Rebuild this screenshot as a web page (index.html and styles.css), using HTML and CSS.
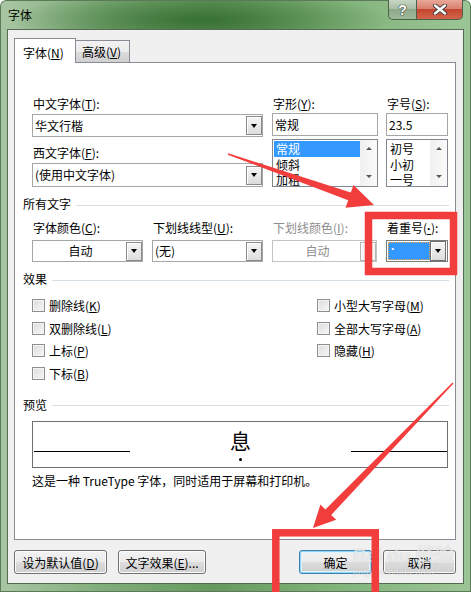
FILE: index.html
```html
<!DOCTYPE html>
<html>
<head>
    <meta charset="utf-8" />
    <title>字体</title>
    <link rel="stylesheet" href="styles.css">
</head>
<body>
<div class="window">
    <div class="titlebar">
        <span class="title">字体</span>
        <div class="caption">
            <span class="cap-help">?</span>
            <span class="cap-close">
                <svg width="14" height="11" viewBox="0 0 14 11">
                    <path d="M2 1.5 L12 9.5 M12 1.5 L2 9.5" stroke="#3b3b3b" stroke-width="4.2" stroke-linecap="round"/>
                    <path d="M2 1.5 L12 9.5 M12 1.5 L2 9.5" stroke="#fff" stroke-width="2.4" stroke-linecap="round"/>
                </svg>
            </span>
        </div>
    </div>
    <div class="client">
        <div class="tabs">
            <div class="tab active">字体(<u>N</u>)</div>
            <div class="tab">高级(<u>V</u>)</div>
        </div>
        <div class="panel">
            <div class="font-row">
                <div class="col col-cn">
                    <span class="lbl">中文字体(<u>T</u>):</span>
                    <div class="combo"><span>华文行楷</span><i class="drop"></i></div>
                    <span class="lbl second">西文字体(<u>F</u>):</span>
                    <div class="combo tall"><span>(使用中文字体)</span><i class="drop"></i></div>
                </div>
                <div class="col col-style">
                    <span class="lbl">字形(<u>Y</u>):</span>
                    <div class="tbox">常规</div>
                    <div class="listbox">
                        <ul>
                            <li class="sel">常规</li>
                            <li>倾斜</li>
                            <li>加粗</li>
                        </ul>
                        <div class="vscroll"><i class="up"></i><i class="down"></i></div>
                    </div>
                </div>
                <div class="col col-size">
                    <span class="lbl">字号(<u>S</u>):</span>
                    <div class="tbox">23.5</div>
                    <div class="listbox">
                        <ul>
                            <li>初号</li>
                            <li>小初</li>
                            <li>一号</li>
                        </ul>
                        <div class="vscroll"><i class="up"></i><i class="down"></i></div>
                    </div>
                </div>
            </div>

            <div class="ghead">所有文字</div>
            <div class="color-row">
                <div class="field f-color">
                    <span class="lbl">字体颜色(<u>C</u>):</span>
                    <div class="combo center"><span>自动</span><i class="drop"></i></div>
                </div>
                <div class="field f-line">
                    <span class="lbl">下划线线型(<u>U</u>):</span>
                    <div class="combo"><span>(无)</span><i class="drop"></i></div>
                </div>
                <div class="field f-lcolor disabled">
                    <span class="lbl">下划线颜色(<u>I</u>):</span>
                    <div class="combo center"><span>自动</span><i class="drop"></i></div>
                </div>
                <div class="field f-emph">
                    <span class="lbl">着重号(<u class="latin">·</u>):</span>
                    <div class="combo focus"><span class="picked">·</span><i class="drop"></i></div>
                </div>
            </div>

            <div class="ghead">效果</div>
            <div class="effects">
                <label class="chk"><i class="box"></i><span>删除线(<u>K</u>)</span></label>
                <label class="chk"><i class="box"></i><span>小型大写字母(<u>M</u>)</span></label>
                <label class="chk"><i class="box"></i><span>双删除线(<u>L</u>)</span></label>
                <label class="chk"><i class="box"></i><span>全部大写字母(<u>A</u>)</span></label>
                <label class="chk"><i class="box"></i><span>上标(<u>P</u>)</span></label>
                <label class="chk"><i class="box"></i><span>隐藏(<u>H</u>)</span></label>
                <label class="chk"><i class="box"></i><span>下标(<u>B</u>)</span></label>
            </div>

            <div class="ghead">预览</div>
            <div class="preview">
                <span class="pline"></span>
                <span class="pchar"><span>息</span><i class="emph"></i></span>
                <span class="pline"></span>
            </div>
            <p class="note">这是一种 TrueType 字体，同时适用于屏幕和打印机。</p>
        </div>
        <div class="btns">
            <button class="btn b-default">设为默认值(<u>D</u>)</button>
            <button class="btn b-effect">文字效果(<u>E</u>)...</button>
            <button class="btn b-ok">确定</button>
            <button class="btn b-cancel">取消</button>
        </div>
    </div>
</div>

<div class="watermark">
    <span class="wm-logo">Bai<span class="wm-du">du</span> 经验</span>
    <span class="wm-url">jingyan.baidu.com</span>
</div>

<svg class="marks" width="471" height="592" viewBox="0 0 471 592">
    <g fill="#f23d3d">
        <polygon points="228.2,153.3 350.8,192.6 353.5,185.1 374,205 345.5,207.7 348.2,200.2 227.8,154.7" />
        <polygon points="453.5,383.5 331.2,515.0 336.2,519.8 313,528 320.4,504.6 325.4,509.4 452.5,382.5" />
    </g>
    <g fill="none" stroke="#f23d3d" stroke-width="7.5">
        <rect x="368.5" y="215.5" width="85" height="56" />
        <rect x="275.8" y="532.8" width="99.5" height="70" />
    </g>
</svg>
</body>
</html>
```

FILE: styles.css
```css
* {
    box-sizing: border-box;
}

body {
    margin: 0;
    width: 471px;
    height: 592px;
    overflow: hidden;
    position: relative;
    font-family: "Noto Sans CJK SC", "Microsoft YaHei", sans-serif;
    font-size: 12px;
    color: #000;
}

u {
    text-decoration: underline;
    text-underline-offset: 1px;
}

.latin {
    font-family: "Liberation Sans", sans-serif;
    font-weight: bold;
}

/* window frame */
.window {
    height: 592px;
    display: flex;
    flex-direction: column;
    background:
        radial-gradient(ellipse 190px 30px at 200px 20px, rgba(50, 108, 46, 0.9), rgba(50, 108, 46, 0) 100%),
        linear-gradient(90deg, #a9c6a3 0%, #80ad7a 22%, #66995f 45%, #80b279 70%, #9cc596 100%);
    box-shadow: inset 0 0 0 1px #5b7b58;
    border-radius: 6px 6px 0 0;
}

.titlebar {
    height: 29px;
    display: flex;
    justify-content: space-between;
    align-items: flex-start;
    padding: 0 8px;
}

.title {
    margin-top: 7px;
    line-height: 16px;
}

.caption {
    display: flex;
}

.cap-help,
.cap-close {
    height: 20px;
    display: flex;
    align-items: center;
    justify-content: center;
    border: 1px solid #4f5f4d;
    border-top: none;
}

.cap-help {
    width: 28px;
    border-radius: 0 0 0 5px;
    border-right: none;
    background: linear-gradient(#c7d6c3 0%, #a9bfa5 45%, #8da98a 50%, #9dba98 100%);
    color: #fff;
    font: bold 14px "Liberation Sans", sans-serif;
    text-shadow: 0 0 1px #333, 0 0 1px #333, 0 0 1px #333;
}

.cap-close {
    width: 47px;
    border-radius: 0 0 5px 0;
    background: linear-gradient(#e9a898 0%, #d98170 45%, #c5452f 50%, #d3654b 100%);
}

.client {
    margin: 0 7px;
    height: 555px;
    background: #f0f0f0;
    border: 1px solid #566a54;
    padding: 8px 0 0 6px;
}

/* tabs */
.tabs {
    display: flex;
    align-items: flex-end;
    height: 24px;
    position: relative;
    z-index: 1;
}

.tab {
    height: 22px;
    width: 55px;
    margin-left: -1px;
    padding: 3px 0 0 6px;
    line-height: 16px;
    border: 1px solid #898c95;
    border-bottom: none;
    background: linear-gradient(#f2f2f2 0%, #ebebeb 50%, #dddddd 50%, #cfcfcf 100%);
}

.tab.active {
    height: 25px;
    width: 62px;
    margin-left: 0;
    margin-bottom: -1px;
    padding: 6px 0 0 8px;
    background: #fff;
    position: relative;
    z-index: 2;
}

.panel {
    width: 442px;
    height: 478px;
    background: #fff;
    border: 1px solid #898c95;
}

/* labels and fields */
.lbl {
    display: block;
    height: 16px;
    line-height: 16px;
    padding-left: 1px;
    white-space: nowrap;
}

.font-row {
    display: flex;
    margin: 33px 0 0 17px;
}

.col-cn {
    width: 231px;
    margin-right: 9px;
}

.col-style {
    width: 106px;
    margin-right: 8px;
}

.col-size {
    width: 62px;
}

.combo {
    height: 23px;
    margin-top: 2px;
    border: 1px solid #a6a6a6;
    background: #fff;
    display: flex;
    align-items: center;
    padding-left: 2px;
    line-height: 16px;
}

.combo.tall {
    height: 24px;
}

.lbl.second {
    margin-top: 8px;
}

.drop {
    margin-left: auto;
    width: 16px;
    height: 19px;
    border: 1px solid #8a8a8a;
    background: linear-gradient(#f6f6f6, #dcdcdc);
    box-shadow: inset 1px 1px 0 #fff;
    display: flex;
    align-items: center;
    justify-content: center;
}

.drop::before {
    content: "";
    border-left: 3.5px solid transparent;
    border-right: 3.5px solid transparent;
    border-top: 4px solid #000;
}

.tbox {
    height: 23px;
    margin-top: 1px;
    border: 1px solid #a6a6a6;
    padding-left: 2px;
    line-height: 21px;
}

.listbox {
    height: 48px;
    margin-top: 3px;
    border: 1px solid #828790;
    display: flex;
    overflow: hidden;
}

.listbox ul {
    flex: 1;
    list-style: none;
    margin: 0;
    padding: 1px 0 0 1px;
}

.listbox li {
    height: 15.5px;
    line-height: 15.5px;
    padding-left: 2px;
}

.listbox li.sel {
    background: #3399ff;
    color: #fff;
}

.vscroll {
    width: 17px;
    background: linear-gradient(90deg, #f0f0f0, #fafafa);
    display: flex;
    flex-direction: column;
    justify-content: space-between;
    align-items: center;
    padding: 7px 0 8px;
}

.vscroll .up {
    border-left: 3px solid transparent;
    border-right: 3px solid transparent;
    border-bottom: 3px solid #555;
}

.vscroll .down {
    border-left: 3px solid transparent;
    border-right: 3px solid transparent;
    border-top: 3px solid #555;
}

/* group headings */
.ghead {
    display: flex;
    align-items: center;
    height: 16px;
    line-height: 16px;
    margin: 9px 6px 0 8px;
}

.ghead::after {
    content: "";
    flex: 1;
    height: 1px;
    margin: 2px 0 0 5px;
    background: #d5dfe5;
}

/* all text row */
.color-row {
    display: flex;
    margin: 8px 0 0 17px;
}

.field .combo {
    margin-top: 4px;
    height: 22px;
}

.f-color,
.f-line {
    width: 111px;
    margin-right: 9px;
}

.f-lcolor {
    width: 105px;
    margin-right: 9px;
}

.f-emph {
    width: 62px;
}

.combo.center span {
    flex: 1;
    text-align: center;
}

.disabled .lbl,
.disabled .combo span {
    color: #8d8d8d;
}

.disabled .combo {
    border-color: #c3c3c3;
}

.disabled .drop {
    border-color: #b5b5b5;
    background: #f4f4f4;
}

.disabled .drop::before {
    border-top-color: #a0a0a0;
}

.combo.focus {
    border-color: #7a7a7a;
    padding: 1px;
}

.picked {
    flex: 1;
    height: 18px;
    background: #3399ff;
    color: #fff;
    outline: 1px dotted #f0a050;
    outline-offset: -1px;
    padding-left: 3px;
    line-height: 16px;
    font: bold 12px "Liberation Sans", sans-serif;
}

.combo.focus .drop {
    height: 20px;
    border-color: #6f6f6f;
}

/* effects */
.effects {
    display: grid;
    grid-template-columns: 285px 1fr;
    grid-auto-rows: 22.7px;
    margin: 7px 0 0 17px;
}

.chk {
    display: flex;
    align-items: center;
    gap: 4px;
    white-space: nowrap;
}

.box {
    width: 13px;
    height: 13px;
    border: 1px solid #8f8f8f;
    background: linear-gradient(135deg, #dcdcdc, #f7f7f7);
    box-shadow: inset 0 0 0 1px #f4f4f4;
}

.effects + .ghead {
    margin-top: 12px;
}

/* preview */
.preview {
    width: 416px;
    height: 47px;
    margin: 8px 0 0 17px;
    border: 1px solid #707070;
    display: flex;
    justify-content: space-between;
    padding-left: 1px;
}

.pline {
    width: 96px;
    height: 1px;
    margin-top: 29px;
    background: #000;
}

.pchar {
    display: flex;
    flex-direction: column;
    align-items: center;
    font-size: 21px;
    line-height: 22px;
    padding-top: 7px;
}

.emph {
    width: 3px;
    height: 3px;
    margin-top: 7px;
    border-radius: 50%;
    background: #000;
}

.note {
    margin: 5px 0 0 17px;
    line-height: 16px;
}

/* buttons */
.btns {
    display: flex;
    height: 24px;
    margin: 10px 7px 0 0;
}

.btn {
    height: 24px;
    padding: 0;
    font: inherit;
    color: #000;
    border: 1px solid #707070;
    border-radius: 3px;
    background: linear-gradient(#f2f2f2 0%, #ebebeb 50%, #dddddd 50%, #cfcfcf 100%);
    box-shadow: inset 0 0 0 1px #fbfbfb;
}

.b-default {
    width: 93px;
    margin-right: 11px;
}

.b-effect {
    width: 88px;
}

.b-ok {
    width: 73px;
    margin-left: auto;
    margin-right: 11px;
    border-color: #3c7fb1;
    box-shadow: inset 0 0 0 1px #8fd5f5, inset 0 0 0 2px #dff3fc;
}

.b-cancel {
    width: 73px;
}

/* overlays */
.watermark {
    position: absolute;
    left: 353px;
    top: 545px;
    display: flex;
    flex-direction: column;
    color: rgba(255, 255, 255, 0.6);
    text-shadow: 0 0 1px rgba(120, 120, 120, 0.35);
    pointer-events: none;
}

.wm-logo {
    font: bold 19px "Liberation Sans", "Noto Sans CJK SC", sans-serif;
    line-height: 22px;
}

.wm-du {
    margin-left: 5px;
}

.wm-url {
    font: 9px "Liberation Sans", sans-serif;
    letter-spacing: 0.5px;
}

.marks {
    position: absolute;
    left: 0;
    top: 0;
    pointer-events: none;
}
```
